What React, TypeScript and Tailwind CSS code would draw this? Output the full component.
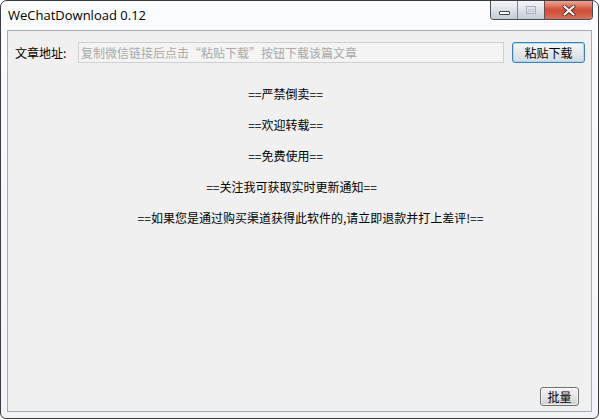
import React from 'react'

const cjk = { fontFamily: '"Noto Sans CJK SC", "Noto Sans", sans-serif' }

const notices = [
    { text: '==严禁倒卖==', shift: 'mr-[28px]' },
    { text: '==欢迎转载==', shift: 'mr-[28px]' },
    { text: '==免费使用==', shift: 'mr-[28px]' },
    { text: '==关注我可获取实时更新通知==', shift: 'mr-[16px]' },
    { text: '==如果您是通过购买渠道获得此软件的,请立即退款并打上差评!==', shift: 'ml-[22px]' },
]

function CaptionButtons() {
    return (
        <div className="flex h-[19px] border border-t-0 border-[#4a4f57] rounded-b-[4px] overflow-hidden shadow-[0_1px_0_rgba(255,255,255,0.8)]">
            <div className="w-[27px] flex items-end justify-center pb-[4px] bg-gradient-to-b from-[#f4f6f8] via-[#dde2e8] to-[#c3cad3] border-r border-[#7e848c]">
                <div className="w-[11px] h-[4px] bg-white border border-[#3e444c] rounded-[1px]" />
            </div>
            <div className="w-[27px] flex items-center justify-center bg-gradient-to-b from-[#f4f6f8] via-[#dde2e8] to-[#c3cad3] border-r border-[#6c4a44]">
                <div className="w-[10px] h-[8px] border border-[#a9b0b8] flex items-center justify-center">
                    <div className="w-[6px] h-[3px] border border-[#c4cad0]" />
                </div>
            </div>
            <div className="w-[47px] flex items-center justify-center bg-gradient-to-b from-[#eba597] via-[#cf4b33] to-[#d8705c]">
                <svg width="14" height="11" viewBox="0 0 14 11">
                    <path d="M2.5 1.5 L11.5 9.5 M11.5 1.5 L2.5 9.5" stroke="#5a2a22" strokeWidth="4" strokeLinecap="round" />
                    <path d="M2.5 1.5 L11.5 9.5 M11.5 1.5 L2.5 9.5" stroke="#ffffff" strokeWidth="2.2" strokeLinecap="round" />
                </svg>
            </div>
        </div>
    )
}

export default function App() {
    return (
        <div className="w-[600px] h-[420px] bg-white">
            <div className="w-[599px] h-[419px] flex flex-col border border-[#3a3d42] rounded-t-[7px] rounded-b-[6px] bg-gradient-to-b from-[#fbfcfd] to-[#f1f3f6] overflow-hidden">
                <div className="h-[29px] flex items-start shrink-0">
                    <div
                        className="flex-1 pl-[7px] pt-[6px] text-[13px] leading-[16px] text-black"
                        style={{ fontFamily: '"Open Sans", "Noto Sans", sans-serif' }}
                    >
                        WeChatDownload 0.12
                    </div>
                    <div className="pr-[5px]">
                        <CaptionButtons />
                    </div>
                </div>

                <div className="flex-1 mx-[6px] mb-[6px] border border-[#a4abb4] bg-[#f0f0f0] flex flex-col" style={cjk}>
                    <div className="flex items-center h-[21px] mt-[11px] pl-[7px] pr-[5px] text-[12px] leading-[12px]">
                        <span className="w-[63px] text-black">文章地址:</span>
                        <div className="w-[426px] h-[21px] border border-[#cfcfcf] bg-[#f4f4f4] flex items-center pl-[2px] text-[#a9a9a9]">
                            复制微信链接后点击“粘贴下载”按钮下载该篇文章
                        </div>
                        <button className="ml-[8px] w-[73px] h-[21px] rounded-[3px] border border-[#3c7fb1] bg-gradient-to-b from-[#f6f8f9] via-[#e5e9ec] to-[#d3dadf] shadow-[inset_0_0_0_1px_rgba(160,215,245,0.9)] text-black text-[12px] leading-[12px]">
                            粘贴下载
                        </button>
                    </div>

                    <div className="flex flex-col items-center gap-[19px] mt-[25px] text-[12px] leading-[12px] text-black">
                        {notices.map(n => (
                            <div key={n.text} className={n.shift}>{n.text}</div>
                        ))}
                    </div>

                    <div className="flex-1" />

                    <div className="flex justify-end pr-[12px] pb-[5px]">
                        <button className="w-[39px] h-[19px] rounded-[3px] border border-[#707070] bg-gradient-to-b from-[#f2f2f2] via-[#e6e6e6] to-[#cfcfcf] shadow-[inset_0_0_0_1px_rgba(255,255,255,0.6)] text-black text-[12px] leading-[12px]">
                            批量
                        </button>
                    </div>
                </div>
            </div>
        </div>
    )
}
